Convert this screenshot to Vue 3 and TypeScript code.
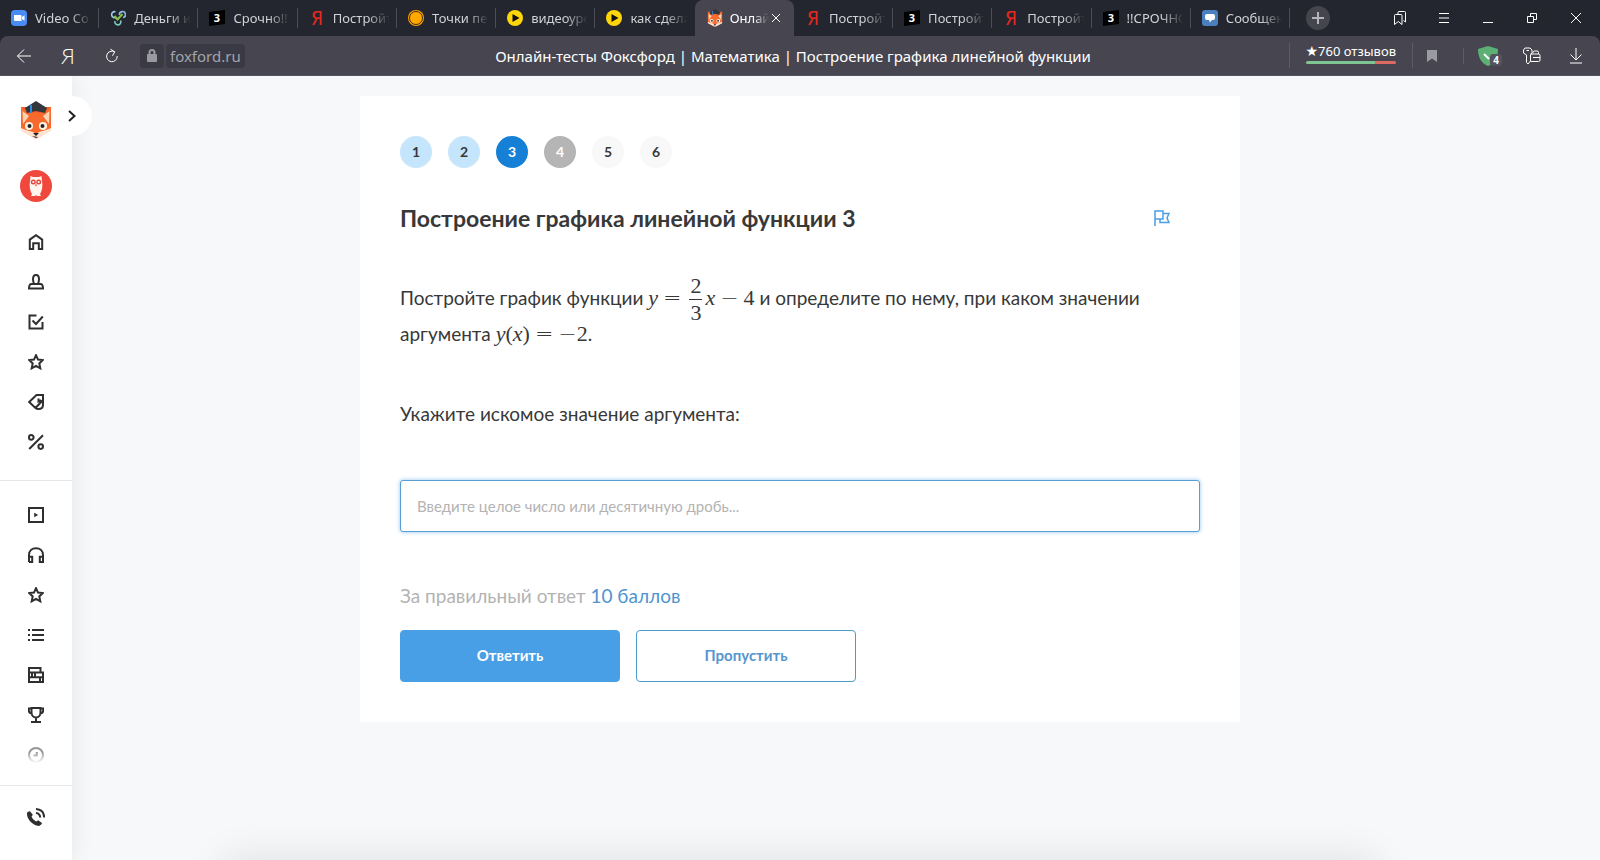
<script setup lang="ts">
import { ref } from 'vue'

interface Tab {
  icon: 'zoom' | 'quiz' | 'znanija' | 'yandex' | 'coin' | 'video' | 'fox' | 'chat'
  title: string
  active?: boolean
}

interface Step {
  n: number
  state: 'done' | 'current' | 'skipped' | 'idle'
}

interface NavIcon {
  label: string
  d: string
  faded?: boolean
}

const tabs: Tab[] = [
  { icon: 'zoom', title: 'Video Co' },
  { icon: 'quiz', title: 'Деньги и' },
  { icon: 'znanija', title: 'Срочно!!' },
  { icon: 'yandex', title: 'Постройт' },
  { icon: 'coin', title: 'Точки пе' },
  { icon: 'video', title: 'видеоурс' },
  { icon: 'video', title: 'как сдела' },
  { icon: 'fox', title: 'Онлай', active: true },
  { icon: 'yandex', title: 'Постройт' },
  { icon: 'znanija', title: 'Постройт' },
  { icon: 'yandex', title: 'Постройт' },
  { icon: 'znanija', title: '!!СРОЧНО' },
  { icon: 'chat', title: 'Сообщен' },
]

const steps: Step[] = [
  { n: 1, state: 'done' },
  { n: 2, state: 'done' },
  { n: 3, state: 'current' },
  { n: 4, state: 'skipped' },
  { n: 5, state: 'idle' },
  { n: 6, state: 'idle' },
]

const star = 'M8 1.2 10 5.6 14.8 6.1 11.3 9.4 12.3 14.3 8 11.8 3.7 14.3 4.7 9.4 1.2 6.1 6 5.6Z'

const mainNav: NavIcon[] = [
  { label: 'Главная', d: 'M1.8 15V5.6L8 1.2 14.2 5.6V15H10.8V9.2H5.2V15Z' },
  { label: 'Профиль', d: 'M5 5.2C5 2.4 6 1 8 1S11 2.4 11 5.2C11 7.4 10.2 9.2 9.7 10H6.3C5.8 9.2 5 7.4 5 5.2ZM6.3 10H3.5C1.8 10 1 11.5 1 14.6H15C15 11.5 14.2 10 12.5 10H9.7' },
  { label: 'Задания', d: 'M8.5 1.5H1.5V14.5H14.5V8M4.5 6.5 8 10 14.8 2.5' },
  { label: 'Избранное', d: star },
  { label: 'Курсы', d: 'M8.5 1H15V11C15 13.5 13 15 10.5 15 9 15 8 14.5 7.5 14L1.2 8ZM7.5 14 14.5 6.5M10.5 4.5V7.5L13 6' },
  { label: 'Скидки', d: 'M1.2 15 15 1.2M1 3.4A2.3 2.3 0 1 0 5.6 3.4 2.3 2.3 0 1 0 1 3.4M10.4 12.6A2.3 2.3 0 1 0 15 12.6 2.3 2.3 0 1 0 10.4 12.6' },
]

const toolNav: NavIcon[] = [
  { label: 'Видео', d: 'M1 1H15V15H1ZM7.2 7.4 8.2 8 7.2 8.6Z' },
  { label: 'Аудио', d: 'M1 15V8C1 3.5 4 1.2 8 1.2S15 3.5 15 8V15H11.8V9.8H15M1 9.8H4.2V15H1' },
  { label: 'Оценки', d: star },
  { label: 'Список', d: 'M0 3H2M0 8H2M0 13H2M4 3H16M4 8H16M4 13H16' },
  { label: 'Библиотека', d: 'M1 1H12.5V5.5H1ZM4 5.5H15V10.2H4ZM1 10.2H15V15H1ZM7 5.5V10M12 10.2V15M1 5.5V10' },
  { label: 'Олимпиады', d: 'M3.5 1H12.5V5.5C12.5 8.5 10.5 10.5 8 10.5S3.5 8.5 3.5 5.5ZM3.5 1.5H.8V3.5C.8 5.5 2 6.5 4 6.8M12.5 1.5H15.2V3.5C15.2 5.5 14 6.5 12 6.8M8 10.5V15M3 15H13' },
  { label: 'История', d: 'M1 8A7 7 0 1 0 15 8 7 7 0 1 0 1 8M8.8 5V8.6H5.5', faded: true },
]

const answer = ref('')
</script>

<template>
  <div class="window">
    <svg class="defs" aria-hidden="true">
      <symbol id="fox" viewBox="0 0 32 38">
        <path d="M1 6H31V29L16 38 1 29Z" fill="#f15a22" />
        <path d="M1 6 12 12 16 11 20 12 31 6V29L16 37 1 29Z" fill="#f7692c" />
        <path d="M2.5 10 9 15 3 23ZM29.5 10 23 15 29 23Z" fill="#fbd3b4" />
        <path d="M1 27 6 29 13 31 16 33 19 31 26 29 31 27V30L16 38 1 30Z" fill="#fde3d2" />
        <path d="M16 0 27 7 25 12 16 10 7 12 5 7Z" fill="#33373d" />
        <path d="M11 4V12" stroke="#2d8be0" stroke-width="2" />
        <circle cx="9" cy="25" r="4" fill="#fff4e4" /><circle cx="23" cy="25" r="4" fill="#fff4e4" />
        <circle cx="9.5" cy="25" r="2" fill="#222" /><circle cx="22.5" cy="25" r="2" fill="#222" />
        <path d="M13 32H19L16 35ZM12 35 16 37 18 36" fill="#222" />
      </symbol>
    </svg>

    <header class="chrome">
      <div class="tabstrip">
        <nav class="tabs" aria-label="Вкладки">
          <button v-for="(tab, i) in tabs" :key="i" type="button" class="tab" :class="{ active: tab.active }">
            <svg class="favicon" viewBox="0 0 16 16" aria-hidden="true">
              <template v-if="tab.icon === 'zoom'">
                <rect width="16" height="16" rx="4" fill="#4a8cf5" />
                <path d="M3 5H9.5Q10.5 5 10.5 6V11H4Q3 11 3 10ZM11 7 13.5 5.2V10.8L11 9Z" fill="#fff" />
              </template>
              <template v-else-if="tab.icon === 'quiz'">
                <g fill="none" stroke-width="1.6">
                  <path d="M6.5 7A3 3 0 1 1 5.5 1.8" stroke="#9ccbe8" />
                  <path d="M9.5 5A3 3 0 1 1 13 7.5" stroke="#8cb8e0" />
                  <path d="M5 11A3 3 0 1 0 10.5 10.5" stroke="#7ec8c4" />
                  <path d="M4.5 6 7.5 9.5 12.5 4" stroke="#8bc34a" stroke-width="2" />
                </g>
              </template>
              <template v-else-if="tab.icon === 'znanija'">
                <path d="M0 2 16 0V14L0 16Z" fill="#000" />
                <text x="8" y="12" text-anchor="middle" class="fav-digit">3</text>
              </template>
              <text v-else-if="tab.icon === 'yandex'" x="8" y="15" text-anchor="middle" class="fav-ya">Я</text>
              <template v-else-if="tab.icon === 'coin'">
                <circle cx="8" cy="8" r="8" fill="#ffa000" />
                <circle cx="8" cy="8" r="6.5" fill="#ffa800" stroke="#3a2d10" />
              </template>
              <template v-else-if="tab.icon === 'video'">
                <circle cx="8" cy="8" r="8" fill="#ffd60a" />
                <path d="M5.5 4 12.5 8 5.5 12Z" fill="#111" />
              </template>
              <use v-else-if="tab.icon === 'fox'" href="#fox" />
              <template v-else>
                <rect width="16" height="16" rx="3" fill="#4a7fc0" />
                <path d="M5 4H11Q13 4 13 6V8Q13 10 11 10H10L8 12.5 7 10H5Q3 10 3 8V6Q3 4 5 4Z" fill="#fff" />
              </template>
            </svg>
            <span class="tab-title">{{ tab.title }}</span>
            <svg v-if="tab.active" class="tab-close" viewBox="0 0 10 10" aria-hidden="true">
              <path d="M1 1 9 9M9 1 1 9" />
            </svg>
          </button>
        </nav>
        <button type="button" class="new-tab" aria-label="Новая вкладка">
          <svg viewBox="0 0 24 24"><path d="M12 6V18M6 12H18" /></svg>
        </button>
        <div class="controls">
          <button type="button" aria-label="Закладки">
            <svg viewBox="0 0 16 16"><path d="M6 4V2.5Q6 1.5 7 1.5H12.5Q13.5 1.5 13.5 2.5V12L11.5 10.5M2.5 5.5Q2.5 4.5 3.5 4.5H9Q10 4.5 10 5.5V14.5L6.2 11.5 2.5 14.5Z" /></svg>
          </button>
          <button type="button" aria-label="Меню">
            <svg viewBox="0 0 16 16"><path d="M3 3.5H13M3 8H13M3 12.5H13" /></svg>
          </button>
          <button type="button" aria-label="Свернуть">
            <svg viewBox="0 0 16 16"><path d="M3 12.5H13" /></svg>
          </button>
          <button type="button" aria-label="Развернуть">
            <svg viewBox="0 0 16 16"><path d="M3.5 6.5H9.5V12.5H3.5ZM6.5 6.5V3.5H12.5V9.5H9.5" /></svg>
          </button>
          <button type="button" aria-label="Закрыть">
            <svg viewBox="0 0 16 16"><path d="M3 3 13 13M13 3 3 13" /></svg>
          </button>
        </div>
      </div>

      <div class="toolbar">
        <div class="tool-left">
          <button type="button" aria-label="Назад">
            <svg viewBox="0 0 16 16"><path d="M15 8H1.5M8 1.5 1.5 8 8 14.5" /></svg>
          </button>
          <button type="button" class="ya">Я</button>
          <button type="button" aria-label="Обновить">
            <svg viewBox="0 0 16 16"><path d="M13.2 8A5.3 5.3 0 1 1 10.5 3.8M6.5 1.2 10.7 3.8 8.5 7.8" /></svg>
          </button>
          <span class="lock">
            <svg viewBox="0 0 12 14" aria-hidden="true">
              <rect x="1" y="5" width="10" height="8" rx="1" fill="#9a9aa2" />
              <path d="M3.5 6V3.5Q3.5 1 6 1T8.5 3.5V6" fill="none" stroke="#9a9aa2" stroke-width="2" />
            </svg>
          </span>
          <a class="host" href="#">foxford.ru</a>
        </div>
        <div class="page-title">Онлайн-тесты Фоксфорд | Математика | Построение графика линейной функции</div>
        <div class="tool-right">
          <a class="reviews" href="#">
            <span class="reviews-text"><span class="reviews-star">★</span>760 отзывов</span>
            <span class="rating"></span>
          </a>
          <button type="button" class="bookmark" aria-label="В закладки">
            <svg viewBox="0 0 12 14"><path d="M1 1H11V13L6 9.5 1 13Z" /></svg>
          </button>
          <button type="button" class="shield">
            <svg viewBox="0 0 20 20" aria-hidden="true">
              <path d="M0 3 10 0 20 3C20 12 16 18 10 20 4 18 0 12 0 3Z" fill="#5db075" />
              <path d="M6 8 11 13" stroke="#fff" stroke-width="2" />
            </svg>
            <span class="count">4</span>
          </button>
          <button type="button" aria-label="Пароли">
            <svg class="wide" viewBox="0 0 20 18"><path d="M3 1H8L10 3V6L8.5 8V14L6 17 4.5 15.5V8L1.5 6V3ZM4.5 3.5H7M11 6V5.5Q11 4 12.5 4H15Q16.5 4 16.5 5.5V7M8.5 7H16.5Q18 7 18 8.5V13Q18 14.5 16.5 14.5H8.5M11 10.5H18" /></svg>
          </button>
          <button type="button" aria-label="Загрузки">
            <svg viewBox="0 0 16 16"><path d="M8 0V12M2.5 6.5 8 12 13.5 6.5M2 15H14" /></svg>
          </button>
        </div>
      </div>
    </header>

    <div class="page">
      <aside class="sidebar">
        <a class="logo" href="#" aria-label="Фоксфорд"><svg viewBox="0 0 32 38"><use href="#fox" /></svg></a>
        <button type="button" class="expand" aria-label="Развернуть меню">
          <svg viewBox="0 0 8 12"><path d="M1 1 6.5 6 1 11" /></svg>
        </button>
        <a class="avatar" href="#" aria-label="Аккаунт">
          <svg viewBox="0 0 32 32">
            <circle cx="16" cy="16" r="16" fill="#f0483c" />
            <path d="M10.5 6 13 7H19L21.5 6 22 11C23 16 22 21 20 24L21 26H17L16 25 15 26H11L12 24C10 21 9 16 10 11Z" fill="#fff4ee" />
            <circle cx="13.3" cy="12" r="1.8" fill="#fff" stroke="#e2453b" stroke-width="1.4" />
            <circle cx="18.7" cy="12" r="1.8" fill="#fff" stroke="#e2453b" stroke-width="1.4" />
            <path d="M14.8 14.5H17.2L16 16.5Z" fill="#e2453b" />
          </svg>
        </a>
        <nav class="nav main" aria-label="Разделы">
          <a v-for="item in mainNav" :key="item.label" href="#" :aria-label="item.label">
            <svg viewBox="0 0 16 16"><path :d="item.d" /></svg>
          </a>
        </nav>
        <nav class="nav tools" aria-label="Материалы">
          <a v-for="item in toolNav" :key="item.label" href="#" :aria-label="item.label" :class="{ faded: item.faded }">
            <svg viewBox="0 0 16 16"><path :d="item.d" /></svg>
          </a>
        </nav>
        <a class="phone" href="#" aria-label="Позвонить">
          <svg viewBox="0 0 18 18">
            <path d="M0 5C.5 4 1.5 3.2 3 3.2L5.8 6.8 4.5 8.8C5.5 10.8 7.2 12.5 9.2 13.5L11.2 12.2 15 15C14.5 17 12.5 18.2 10.5 17.8 5 16.5-.5 10.5 0 5Z" fill="#2f2f2f" />
            <path d="M9 5Q13 5.5 13.2 9.5M9 1Q17 1.5 17.2 9.5" fill="none" stroke="#2f2f2f" stroke-width="2" />
          </svg>
        </a>
      </aside>

      <main class="content">
        <form class="card" @submit.prevent>
          <div class="steps">
            <button v-for="s in steps" :key="s.n" type="button" class="step" :class="s.state">{{ s.n }}</button>
          </div>
          <div class="heading">
            <h1>Построение графика линейной функции 3</h1>
            <button type="button" class="flag" aria-label="Пожаловаться">
              <svg viewBox="0 0 16 16"><path d="M1 16V1H9V9H1M9 3.5H15L13 8 15 12.5H6V9" /></svg>
            </button>
          </div>
          <p class="task">
            Постройте график функции
            <span class="math"><i>y</i><span class="rel">=</span><span class="frac"><span class="num">2</span><span>3</span></span><i>x</i><span class="bin">−</span>4</span>
            и определите по нему, при каком значении аргумента
            <span class="math"><i>y</i>(<i>x</i>)<span class="rel">=</span><span class="neg">−</span>2</span>.
          </p>
          <label class="question" for="answer">Укажите искомое значение аргумента:</label>
          <input id="answer" v-model="answer" class="answer" type="text" placeholder="Введите целое число или десятичную дробь..." />
          <p class="points">За правильный ответ <span>10 баллов</span></p>
          <div class="actions">
            <button type="submit" class="btn primary">Ответить</button>
            <button type="button" class="btn">Пропустить</button>
          </div>
        </form>
      </main>
      <div class="dock-shadow"></div>
    </div>
  </div>
</template>

<style>
body {
  margin: 0;
}
</style>

<style scoped>
* {
  box-sizing: border-box;
}
.window {
  display: flex;
  flex-direction: column;
  min-height: 100vh;
  font-family: Lato, "Open Sans", sans-serif;
  color: #383838;
  background: #f6f8fa;
}
button {
  font: inherit;
  color: inherit;
  background: none;
  border: 0;
  padding: 0;
}
a {
  color: inherit;
  text-decoration: none;
}
svg {
  display: block;
}
.defs {
  position: absolute;
  width: 0;
  height: 0;
}

.chrome {
  background: #24262f;
  color: #fff;
  font-family: "Noto Sans", "Open Sans", sans-serif;
}
.tabstrip {
  display: flex;
  align-items: center;
  height: 36px;
}
.tabs {
  display: flex;
  flex: 0 1 1290px;
  align-self: stretch;
  min-width: 0;
}
.tab {
  position: relative;
  display: flex;
  flex: 1 1 0;
  align-items: center;
  min-width: 0;
  padding: 0 1px 0 11px;
  font-size: 13px;
  color: #d2d3d7;
}
.tab::after {
  content: "";
  position: absolute;
  right: 0;
  top: 8px;
  width: 1px;
  height: 20px;
  background: #4b4d56;
}
.tab.active {
  background: #474650;
  border-radius: 8px 8px 0 0;
  color: #fff;
}
.tab.active::after,
.tab:has(+ .active)::after {
  display: none;
}
.favicon {
  flex: none;
  width: 16px;
  height: 16px;
  margin-right: 8px;
}
.active .favicon {
  width: 18px;
  height: 18px;
  margin-right: 6px;
}
.fav-digit {
  font: 700 11px "Open Sans", sans-serif;
  fill: #fff;
}
.fav-ya {
  font: 400 19px "Liberation Sans Narrow", "DejaVu Sans Condensed", sans-serif;
  fill: #e8281e;
}
.tab-title {
  flex: 1;
  min-width: 0;
  overflow: hidden;
  white-space: nowrap;
  text-align: left;
  mask-image: linear-gradient(to right, #000 55%, transparent 90%);
}
.active .tab-title {
  mask-image: linear-gradient(to right, #000 60%, transparent);
}
.tab-close {
  flex: none;
  width: 10px;
  height: 10px;
  margin: 0 12px 0 2px;
  fill: none;
  stroke: #fff;
}
.new-tab {
  width: 24px;
  height: 24px;
  margin-left: 16px;
  flex: none;
  border-radius: 50%;
  background: #44454d;
}
.new-tab svg {
  fill: none;
  stroke: #b4b5ba;
  stroke-width: 2;
}
.controls {
  display: flex;
  margin-left: auto;
  padding-right: 2px;
}
.controls button,
.tool-left button,
.tool-right button {
  display: flex;
  align-items: center;
  justify-content: center;
  width: 44px;
  height: 36px;
}
.controls svg,
.tool-left button svg,
.tool-right button svg {
  width: 16px;
  height: 16px;
  fill: none;
  stroke: #fff;
}
.toolbar {
  display: grid;
  grid-template-columns: 1fr auto 1fr;
  align-items: center;
  height: 40px;
  padding: 0 2px;
  background: #474650;
  border-radius: 8px 8px 0 0;
  border-bottom: 1px solid #565460;
}
.tool-left {
  display: flex;
  align-items: center;
}
.tool-left .ya {
  font: 300 21px Lato, sans-serif;
}
.lock {
  display: flex;
  align-items: center;
  justify-content: center;
  width: 24px;
  height: 24px;
  margin: 0 2px 0 6px;
  border-radius: 4px;
  background: #393a43;
}
.lock svg {
  width: 12px;
  height: 14px;
}
.host {
  height: 24px;
  padding: 0 4px;
  border-radius: 4px;
  background: #393a43;
  color: #a3a3ab;
  font-size: 15px;
  line-height: 24px;
}
.page-title {
  padding-right: 14px;
  font-size: 15px;
  white-space: nowrap;
}
.tool-right {
  display: flex;
  align-items: center;
  justify-content: flex-end;
}
.reviews {
  display: flex;
  flex-direction: column;
  gap: 2px;
  padding: 0 16px;
  border: solid #5d5c66;
  border-width: 0 1px;
  font-size: 13px;
  line-height: 16px;
  white-space: nowrap;
}
.reviews-star {
  font-family: "DejaVu Sans", sans-serif;
  font-size: 14px;
}
.rating {
  height: 3px;
  margin-bottom: 4px;
  border-radius: 2px;
  background: linear-gradient(to right, #7fc393 77%, #dd6a62 77%);
}
.tool-right .bookmark {
  width: 51px;
  height: 16px;
  padding-right: 12px;
  border-right: 1px solid #5d5c66;
}
.tool-right .bookmark svg {
  width: 12px;
  height: 14px;
  fill: #9a9aa2;
  stroke: none;
}
.tool-right .shield {
  position: relative;
  width: 46px;
  padding-left: 2px;
}
.tool-right .shield svg {
  width: 20px;
  height: 20px;
  stroke: none;
}
.count {
  position: absolute;
  left: 26px;
  top: 16px;
  width: 12px;
  border-radius: 3px;
  background: #54535d;
  font-size: 10px;
  font-weight: 700;
  line-height: 12px;
}
.tool-right button .wide {
  width: 20px;
  height: 18px;
}

.page {
  position: relative;
  display: flex;
  flex: 1;
  overflow: hidden;
}
.sidebar {
  position: relative;
  display: flex;
  flex: none;
  flex-direction: column;
  align-items: center;
  width: 72px;
  background: #fff;
  box-shadow: 0 0 24px rgba(0, 0, 0, 0.08);
}
.logo {
  margin-top: 25px;
}
.logo svg {
  width: 32px;
  height: 38px;
}
.expand {
  position: absolute;
  left: 52px;
  top: 20px;
  display: flex;
  align-items: center;
  justify-content: center;
  width: 40px;
  height: 40px;
  border-radius: 50%;
  background: #fff;
}
.expand svg {
  width: 8px;
  height: 12px;
  fill: none;
  stroke: #222;
  stroke-width: 2;
}
.avatar {
  margin-top: 31px;
}
.avatar svg {
  width: 32px;
  height: 32px;
}
.nav {
  display: flex;
  flex-direction: column;
  align-items: center;
  gap: 24px;
  width: 100%;
  border-bottom: 1px solid #e6e6e6;
}
.nav svg {
  width: 16px;
  height: 16px;
  fill: none;
  stroke: #2f2f2f;
  stroke-width: 2;
}
.main {
  padding: 32px 0 30px;
}
.tools {
  padding: 26px 0 22px;
}
.faded {
  opacity: 0.5;
  mask-image: linear-gradient(#000 30%, transparent);
}
.phone {
  margin-top: 22px;
}
.phone svg {
  width: 18px;
  height: 18px;
}

.content {
  flex: 1;
  padding: 20px 72px 0 0;
}
.card {
  display: flex;
  flex-direction: column;
  max-width: 880px;
  margin: 0 auto;
  padding: 40px;
  background: #fff;
}
.steps {
  display: flex;
  gap: 16px;
}
.step {
  width: 32px;
  height: 32px;
  border-radius: 50%;
  font-size: 14px;
  font-weight: 700;
  line-height: 32px;
  background: #f8f8f8;
}
.step.done {
  background: #c5e5fd;
}
.step.current {
  background: #1680d6;
  color: #fff;
}
.step.skipped {
  background: #b5b5b5;
  color: #fff;
}
.heading {
  display: flex;
  align-items: center;
  justify-content: space-between;
  margin-top: 34px;
  padding-right: 30px;
}
h1 {
  margin: 0;
  font-size: 23px;
  font-weight: 700;
  line-height: 32px;
}
.flag svg {
  width: 16px;
  height: 16px;
  fill: none;
  stroke: #4a9fe6;
  stroke-width: 1.5;
}
.task {
  margin: 46px 0 0;
  font-size: 19px;
  line-height: 36px;
}
.math {
  font-family: "Liberation Serif", serif;
  font-size: 22px;
  line-height: 24px;
  white-space: nowrap;
}
.rel,
.bin,
.neg {
  font-family: "DejaVu Sans", sans-serif;
  font-weight: 200;
}
.rel {
  margin: 0 5px;
}
.bin {
  margin: 0 5px;
}
.frac {
  display: inline-flex;
  flex-direction: column;
  align-items: center;
  margin: -12px 3px;
  line-height: 26px;
  vertical-align: middle;
}
.num {
  padding: 0 1px;
  border-bottom: 1px solid #383838;
}
.question {
  margin-top: 44px;
  font-size: 19px;
  line-height: 36px;
}
.answer {
  width: 100%;
  height: 52px;
  margin-top: 48px;
  padding: 0 16px;
  border: 1px solid #5a9fd4;
  border-radius: 3px;
  outline: 0;
  box-shadow: 0 0 4px rgba(74, 159, 230, 0.6);
  font: 400 15px Lato, "Open Sans", sans-serif;
  color: #383838;
}
.answer::placeholder {
  color: #b3b3b3;
}
.points {
  margin: 48px 0 0;
  font-size: 19px;
  line-height: 32px;
  color: #b3b3b3;
}
.points span {
  color: #4f94cf;
}
.actions {
  display: flex;
  gap: 16px;
  margin-top: 18px;
}
.btn {
  width: 220px;
  height: 52px;
  padding-bottom: 2px;
  border: 1px solid #4a9cc9;
  border-radius: 4px;
  font-size: 15px;
  font-weight: 700;
  color: #5596cf;
}
.primary {
  border-color: #489fe6;
  background: #489fe6;
  color: #fff;
}
.dock-shadow {
  position: absolute;
  left: 14%;
  right: 14%;
  top: 100%;
  height: 40px;
  box-shadow: 0 0 40px rgba(0, 0, 0, 0.11);
}
</style>
